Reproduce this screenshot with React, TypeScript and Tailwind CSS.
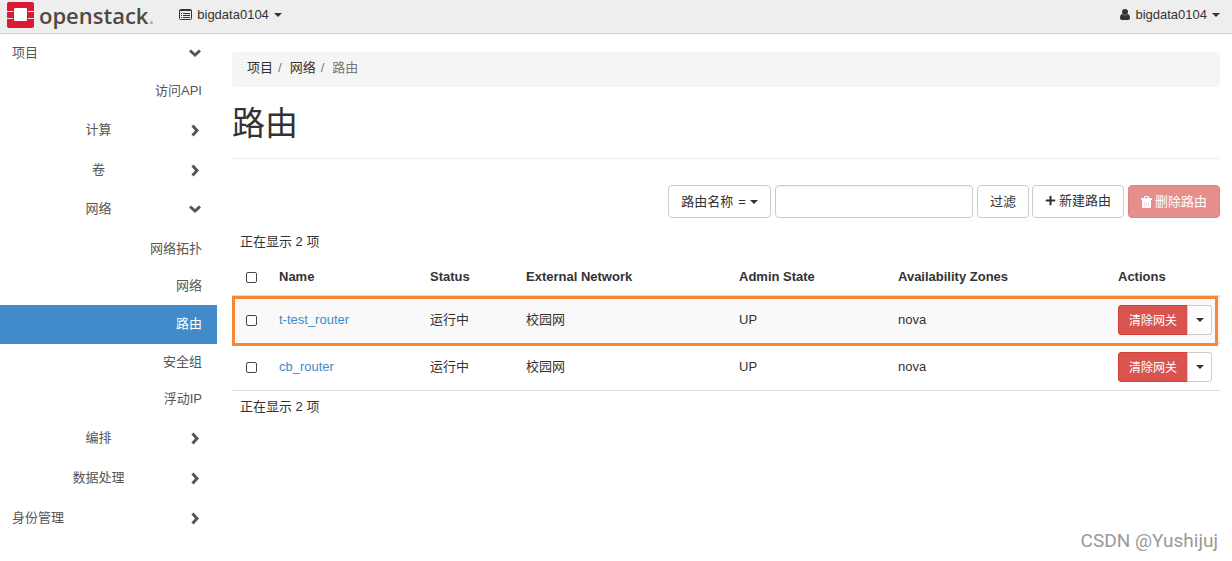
import React, { useState } from 'react';
import { FaPlus } from 'react-icons/fa';
import clsx from 'clsx';

type Leaf = { label: string; active?: boolean };
type Panel = { label: string; items?: Leaf[] };

const PROJECT_PANELS: Panel[] = [
  { label: '计算' },
  { label: '卷' },
  {
    label: '网络',
    items: [
      { label: '网络拓扑' },
      { label: '网络' },
      { label: '路由', active: true },
      { label: '安全组' },
      { label: '浮动IP' },
    ],
  },
  { label: '编排' },
  { label: '数据处理' },
];

const ROUTERS = [
  { name: 't-test_router', status: '运行中', network: '校园网', admin: 'UP', zone: 'nova', marked: true },
  { name: 'cb_router', status: '运行中', network: '校园网', admin: 'UP', zone: 'nova', marked: false },
];

const Caret = () => (
  <svg width="8" height="4" viewBox="0 0 8 4" fill="currentColor" aria-hidden="true">
    <path d="M0 0h8L4 4z" />
  </svg>
);

const Chevron = ({ open }: { open?: boolean }) => (
  <svg width="13" height="13" viewBox="0 0 13 13" fill="none" stroke="currentColor" strokeWidth="3" aria-hidden="true">
    <path d={open ? 'M1 3.5l5 4.5 5-4.5' : 'M3.5 1.5L8 6.5l-4.5 5'} />
  </svg>
);

const Logo = () => (
  <a href="#" className="flex items-center gap-[5px]" aria-label="openstack">
    <svg width="27" height="26" viewBox="0 0 27 26" aria-hidden="true">
      <rect width="27" height="26" rx="2" fill="#da1a32" />
      <rect x="7" y="6" width="13" height="13" rx="1" fill="#fff" />
      <path d="M0 9.5h6M0 16.5h6M21 9.5h6M21 16.5h6" stroke="#f7dde0" />
    </svg>
    <span className="flex items-baseline font-['Open_Sans',sans-serif] text-[22px] leading-6 font-semibold text-[#4f4944]">
      openstack
      <span className="font-normal text-[#aaa]">.</span>
    </span>
  </a>
);

const ListIcon = () => (
  <svg width="13" height="11" viewBox="0 0 13 11" fill="none" stroke="currentColor" aria-hidden="true">
    <rect x="0.5" y="0.5" width="12" height="10" rx="1" />
    <path d="M1 1.5h11M2 4.5h1M4 4.5h7M2 6.5h1M4 6.5h7M2 8.5h1M4 8.5h7" />
  </svg>
);

const UserIcon = () => (
  <svg width="10" height="11" viewBox="0 0 10 11" fill="currentColor" aria-hidden="true">
    <circle cx="5" cy="3" r="3" />
    <path d="M2.2 5C.8 5.3 0 6.8 0 9c0 1.2.8 2 2 2h6c1.200 0 2-.8 2-2 0-2.200-.8-3.700-2.200-4C7 5.900 6 6.300 5 6.300S3 5.900 2.200 5z" />
  </svg>
);

const TrashIcon = () => (
  <svg width="11" height="12" viewBox="0 0 11 12" fill="currentColor" aria-hidden="true">
    <path d="M4 0h3a1 1 0 0 1 1 1v1h2a1 1 0 0 1 1 1v1H0V3a1 1 0 0 1 1-1h2V1a1 1 0 0 1 1-1zm0 1v1h3V1z" />
    <path d="M1 4h9v7a1 1 0 0 1-1 1H2a1 1 0 0 1-1-1z" />
    <path d="M3.5 6v4.5M5.5 6v4.5M7.5 6v4.5" stroke="#d9534f" strokeOpacity="0.35" fill="none" />
  </svg>
);

const NavHeader = ({ label, open, root }: { label: string; open?: boolean; root?: boolean }) => (
  <button
    type="button"
    aria-expanded={!!open}
    className={clsx('flex w-full items-center pr-[15px] pl-3', open ? 'h-[39px] pb-0.5' : 'h-10 pb-px')}
  >
    <span className={clsx('flex-1', root ? 'text-left' : 'text-center')}>{label}</span>
    <span className="flex w-[17px] justify-center pt-px pl-[3px]">
      <Chevron open={open} />
    </span>
  </button>
);

const NavLeaf = ({ label, active }: Leaf) => (
  <a
    href="#"
    className={clsx(
      'flex items-center justify-end pr-[15px] pb-px',
      active ? 'h-[39px] bg-[#428bca] text-white' : 'h-[37px]'
    )}
  >
    {label}
  </a>
);

const Sidebar = () => (
  <nav className="w-[217px] shrink-0 text-[#555]">
    <NavHeader label="项目" open root />
    <NavLeaf label="访问API" />
    {PROJECT_PANELS.map((panel) => (
      <div key={panel.label}>
        <NavHeader label={panel.label} open={!!panel.items} />
        {panel.items && (
          <div className="pt-0.5">
            {panel.items.map((item) => <NavLeaf key={item.label} {...item} />)}
          </div>
        )}
      </div>
    ))}
    <NavHeader label="身份管理" root />
  </nav>
);

const Check = ({ label }: { label: string }) => (
  <input
    type="checkbox"
    aria-label={label}
    className="mx-auto block size-[11px] appearance-none rounded-xs border border-[#444] bg-white checked:bg-[#428bca]"
  />
);

const RouterTable = () => (
  <table className="w-full table-fixed border-separate border-spacing-0 text-left">
    <colgroup>
      <col className="w-[39px]" />
      <col className="w-[151px]" />
      <col className="w-[96px]" />
      <col className="w-[213px]" />
      <col className="w-[159px]" />
      <col className="w-[220px]" />
      <col className="w-[110px]" />
    </colgroup>
    <thead>
      <tr className="h-10 [&>th]:border-b-2 [&>th]:border-[#ddd] [&>th]:px-2 [&>th]:pt-0.5">
        <th><Check label="全选" /></th>
        <th>Name</th>
        <th>Status</th>
        <th>External Network</th>
        <th>Admin State</th>
        <th>Availability Zones</th>
        <th>Actions</th>
      </tr>
    </thead>
    <tbody>
      {ROUTERS.map((r) => (
        <tr
          key={r.name}
          className="relative odd:bg-[#f9f9f9] [&>td]:px-2 [&>td]:py-2 [&+tr>td]:border-t [&+tr>td]:border-[#ddd]"
        >
          <td>
            <Check label={r.name} />
            {r.marked && (
              <span className="pointer-events-none absolute -top-px right-0.5 -bottom-[3px] left-0 z-10 border-3 border-[#f88835]" />
            )}
          </td>
          <td><a href="#" className="text-[#428bca]">{r.name}</a></td>
          <td>{r.status}</td>
          <td>{r.network}</td>
          <td>{r.admin}</td>
          <td>{r.zone}</td>
          <td>
            <div className="flex h-[30px]">
              <button type="button" className="w-[70px] rounded-l-[3px] border border-[#d43f3a] bg-[#d9534f] pt-0.5 text-xs text-white">
                清除网关
              </button>
              <button type="button" aria-label="更多操作" className="-ml-px flex w-[25px] items-center justify-center rounded-r-[3px] border border-[#ccc] bg-white">
                <Caret />
              </button>
            </div>
          </td>
        </tr>
      ))}
    </tbody>
    <tfoot>
      <tr>
        <td colSpan={7} className="h-8 border-t border-[#ddd] px-2">正在显示 2 项</td>
      </tr>
    </tfoot>
  </table>
);

const BTN = 'flex h-[33px] items-center justify-center rounded-sm border';

export default function App() {
  const [filter, setFilter] = useState('');

  return (
    <div className="relative min-h-screen bg-white font-['Liberation_Sans','Noto_Sans_CJK_SC',sans-serif] text-[13px] leading-[18px] text-[#333]">
      <header className="flex h-[34px] items-center justify-between border-b border-[#ccc] bg-[#eee] pr-3 pb-1 pl-[7px]">
        <div className="flex items-center gap-[25px]">
          <Logo />
          <button type="button" className="flex items-center gap-[5px]">
            <ListIcon />
            bigdata0104
            <Caret />
          </button>
        </div>
        <button type="button" className="flex items-center gap-[5px]">
          <UserIcon />
          bigdata0104
          <Caret />
        </button>
      </header>

      <div className="flex">
        <Sidebar />
        <main className="min-w-0 flex-1 pt-[18px] pr-3 pl-[15px]">
          <nav aria-label="breadcrumb" className="flex h-[35px] items-center rounded-sm bg-[#f5f5f5] px-[15px] pb-[3px]">
            <a href="#">项目</a>
            <span className="pr-2 pl-[5px] text-[#777]">/</span>
            <a href="#">网络</a>
            <span className="pr-2 pl-[5px] text-[#777]">/</span>
            <span className="text-[#777]">路由</span>
          </nav>
          <h1 className="mb-[26px] h-[72px] border-b border-[#eee] pt-[17px] text-[33px] leading-10">路由</h1>

          <form className="flex justify-end gap-[3px]" onSubmit={(e) => e.preventDefault()}>
            <div className="flex gap-1">
              <button type="button" className={clsx(BTN, 'w-[103px] gap-1 border-[#ccc]')}>
                <span className="flex gap-[5px]">
                  路由名称 <span>=</span>
                </span>
                <Caret />
              </button>
              <input
                type="text"
                aria-label="路由名称"
                value={filter}
                onChange={(e) => setFilter(e.target.value)}
                className="h-[33px] w-[198px] rounded-sm border border-[#ccc] px-3 inset-shadow-2xs"
              />
              <button type="submit" className={clsx(BTN, 'w-[52px] border-[#ccc]')}>过滤</button>
            </div>
            <div className="flex gap-1">
              <button type="button" className={clsx(BTN, 'w-[92px] gap-[3px] border-[#ccc] pb-0.5')}>
                <FaPlus size={11} />
                新建路由
              </button>
              <button type="button" disabled className={clsx(BTN, 'w-[92px] gap-[3px] border-[#d43f3a] bg-[#d9534f] text-white opacity-65')}>
                <TrashIcon />
                删除路由
              </button>
            </div>
          </form>

          <p className="px-2 pt-[15px] pb-[6px]">正在显示 2 项</p>
          <RouterTable />
        </main>
      </div>

      <div className="absolute right-3.5 bottom-2 font-['Roboto',sans-serif] text-[19px] leading-6 text-[#999]">
        CSDN @Yushijuj
      </div>
    </div>
  );
}
